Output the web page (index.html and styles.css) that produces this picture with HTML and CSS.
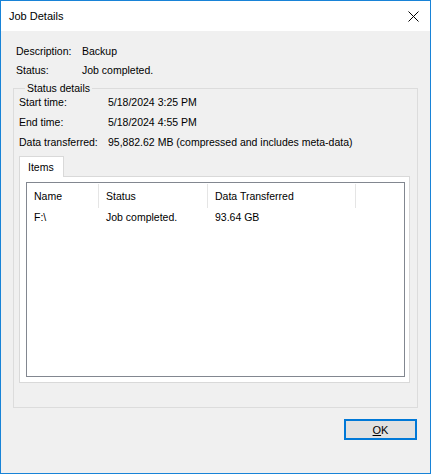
FILE: index.html
```html
<!DOCTYPE html>
<html lang="en">

<head>
  <meta charset="UTF-8">
  <title>Job Details</title>
  <link rel="stylesheet" href="styles.css">
</head>

<body>
  <div class="window">
    <div class="titlebar">
      <span class="title">Job Details</span>
      <span class="close">
        <svg width="11" height="11" viewBox="0 0 11 11">
          <path d="M0.5 0.5 L10.5 10.5 M10.5 0.5 L0.5 10.5" stroke="#000" stroke-width="1" fill="none"/>
        </svg>
      </span>
    </div>

    <div class="content">
      <div class="info">
        <span>Description:</span><span>Backup</span>
        <span>Status:</span><span>Job completed.</span>
      </div>

      <fieldset class="group">
        <legend>Status details</legend>
        <div class="details">
          <span>Start time:</span><span>5/18/2024 3:25 PM</span>
          <span>End time:</span><span>5/18/2024 4:55 PM</span>
          <span>Data transferred:</span><span>95,882.62 MB (compressed and includes meta-data)</span>
        </div>

        <div class="tabs">
          <div class="tab">Items</div>
        </div>
        <div class="tabpage">
          <div class="listview">
            <div class="lv-header">
              <div class="col c1">Name</div>
              <div class="col c2">Status</div>
              <div class="col c3">Data Transferred</div>
            </div>
            <div class="lv-row">
              <div class="cell c1">F:\</div>
              <div class="cell c2">Job completed.</div>
              <div class="cell c3">93.64 GB</div>
            </div>
          </div>
        </div>
      </fieldset>

      <div class="buttons">
        <button class="btn default"><u>O</u>K</button>
      </div>
    </div>
  </div>
</body>

</html>
```

FILE: styles.css
```css
html, body {
  margin: 0;
  padding: 0;
}

body {
  font-family: "Liberation Sans", Arial, sans-serif;
  font-size: 10.5px;
  color: #000;
  background: #fff;
}

.window {
  width: 431px;
  height: 474px;
  box-sizing: border-box;
  border: 1px solid #1883d7;
  background-color: #f0f0f0;
  display: flex;
  flex-direction: column;
}

.titlebar {
  height: 30px;
  background-color: #fff;
  display: flex;
  align-items: center;
  padding-left: 8px;
  padding-right: 11px;
}

.title {
  flex: 1;
  font-size: 11px;
}

.close {
  display: flex;
}

.content {
  flex: 1;
  display: flex;
  flex-direction: column;
  padding: 10px 12px 0 12px;
}

.info {
  display: grid;
  grid-template-columns: 66px 1fr;
  grid-auto-rows: 19px;
  align-items: center;
  padding-left: 3px;
}

.group {
  margin: 3px 0 0 0;
  padding: 0 0 25px 5px;
  border: 1px solid #dcdcdc;
  height: 326px;
  box-sizing: border-box;
}

.group legend {
  padding: 0 2px;
  margin-left: 6px;
  line-height: 12px;
}

.details {
  display: grid;
  grid-template-columns: 89px 1fr;
  grid-auto-rows: 20px;
  align-items: center;
  margin-top: -2px;
}

.tabs {
  display: flex;
  margin-top: 4px;
  position: relative;
  z-index: 1;
}

.tab {
  width: 45px;
  height: 21px;
  box-sizing: border-box;
  background-color: #fff;
  border: 1px solid #d9d9d9;
  border-bottom: none;
  padding: 4px 0 0 8px;
  margin-bottom: -1px;
}

.tabpage {
  width: 391px;
  height: 207px;
  box-sizing: border-box;
  background-color: #fff;
  border: 1px solid #d9d9d9;
  padding: 5px 4px 5px 6px;
}

.listview {
  height: 100%;
  box-sizing: border-box;
  border: 1px solid #828790;
  background-color: #fff;
}

.lv-header,
.lv-row {
  display: flex;
}

.lv-header {
  height: 25px;
  align-items: center;
}

.col {
  height: 24px;
  line-height: 24px;
  border-right: 1px solid #e5e5e5;
  padding-left: 7px;
  box-sizing: border-box;
}

.c1 { width: 72px; }
.c2 { width: 109px; }
.c3 { width: 148px; }

.lv-row {
  height: 17px;
  align-items: center;
}

.cell {
  padding-left: 7px;
  box-sizing: border-box;
}

.buttons {
  display: flex;
  justify-content: flex-end;
  margin-top: 11px;
  padding-right: 1px;
}

.btn {
  width: 73px;
  height: 21px;
  box-sizing: border-box;
  font-family: inherit;
  font-size: 11px;
  background-color: #e1e1e1;
  padding: 0;
}

.btn.default {
  border: 2px solid #0078d7;
}
```
